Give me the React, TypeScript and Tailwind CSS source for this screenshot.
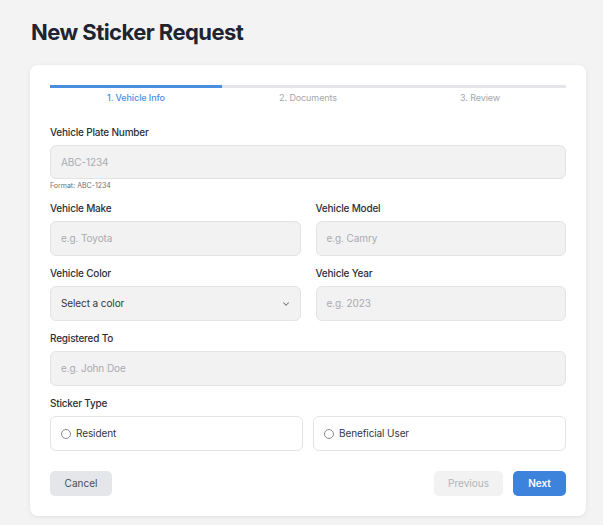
import React from "react";

function Label({ children }: { children: React.ReactNode }) {
  return (
    <div className="h-[14px] text-[10px] leading-[14px] font-medium text-[#2b2f38] tracking-[-0.2px]">
      {children}
    </div>
  );
}

function Input({ placeholder }: { placeholder: string }) {
  return (
    <div className="mt-[6px] h-[35px] rounded-[6px] border border-[#e3e3e6] bg-[#f2f2f3] px-[10px] flex items-center text-[10px] text-[#a9abb0] tracking-[-0.1px]">
      {placeholder}
    </div>
  );
}

function Radio({ label }: { label: string }) {
  return (
    <div className="h-[35px] rounded-[6px] border border-[#e3e3e6] bg-white px-[10px] flex items-center gap-[5px]">
      <span className="w-[10px] h-[10px] rounded-full border border-[#8a8d93] bg-white" />
      <span className="text-[10px] text-[#33363d] tracking-[-0.1px]">{label}</span>
    </div>
  );
}

export default function App() {
  return (
    <div
      className="min-h-[525px] bg-[#f3f3f3] pl-[30px] pr-[17px] pt-[18px]"
      style={{ fontFamily: "Inter, 'Noto Sans', sans-serif" }}
    >
      <h1 className="h-[28px] text-[22px] leading-[28px] font-bold text-[#1f2432] tracking-[-0.55px] pl-[1px]">
        New Sticker Request
      </h1>
      <div className="mt-[19px] bg-white rounded-[8px] shadow-[0_1px_4px_rgba(0,0,0,0.08)] px-5 pt-[20px] pb-5">
        <div className="grid grid-cols-3">
          <div className="h-[3px] bg-[#4a8ee0]" />
          <div className="h-[3px] bg-[#e4e6ea]" />
          <div className="h-[3px] bg-[#e4e6ea]" />
        </div>
        <div className="grid grid-cols-3 mt-[4px] text-[9px] leading-[12px] text-center tracking-[-0.1px]">
          <div className="text-[#4a8ee0] font-medium">1. Vehicle Info</div>
          <div className="text-[#a3a6ac]">2. Documents</div>
          <div className="text-[#a3a6ac]">3. Review</div>
        </div>

        <div className="mt-[21px]">
          <Label>Vehicle Plate Number</Label>
          <div className="mt-[6px] h-[34px] rounded-[6px] border border-[#e3e3e6] bg-[#f2f2f3] px-[10px] flex items-center text-[10px] text-[#a9abb0] tracking-[-0.1px]">
            ABC-1234
          </div>
          <div className="mt-[2px] text-[7px] leading-[10px] text-[#6b6e75]">Format: ABC-1234</div>
        </div>

        <div className="mt-[10px] grid grid-cols-2 gap-x-[15px]">
          <div>
            <Label>Vehicle Make</Label>
            <Input placeholder="e.g. Toyota" />
          </div>
          <div>
            <Label>Vehicle Model</Label>
            <Input placeholder="e.g. Camry" />
          </div>
        </div>

        <div className="mt-[10px] grid grid-cols-2 gap-x-[15px]">
          <div>
            <Label>Vehicle Color</Label>
            <div className="mt-[6px] h-[35px] rounded-[6px] border border-[#e3e3e6] bg-[#f2f2f3] pl-[10px] pr-[9px] flex items-center justify-between text-[10px] text-[#33363d] tracking-[-0.1px]">
              <span>Select a color</span>
              <svg width="10" height="10" viewBox="0 0 24 24" fill="none" stroke="#70737a" strokeWidth="2.5" strokeLinecap="round" strokeLinejoin="round">
                <path d="M6 9l6 6 6-6" />
              </svg>
            </div>
          </div>
          <div>
            <Label>Vehicle Year</Label>
            <Input placeholder="e.g. 2023" />
          </div>
        </div>

        <div className="mt-[10px]">
          <Label>Registered To</Label>
          <Input placeholder="e.g. John Doe" />
        </div>

        <div className="mt-[10px]">
          <Label>Sticker Type</Label>
          <div className="mt-[6px] grid grid-cols-2 gap-x-[10px]">
            <Radio label="Resident" />
            <Radio label="Beneficial User" />
          </div>
        </div>

        <div className="mt-[20px] flex items-center justify-between">
          <button className="h-[25px] w-[62px] rounded-[5px] bg-[#e4e6ea] text-[10px] text-[#4a4d55]">
            Cancel
          </button>
          <div className="flex gap-[10px]">
            <button className="h-[25px] w-[69px] rounded-[5px] bg-[#f2f2f3] text-[10px] text-[#b0b2b7]">
              Previous
            </button>
            <button className="h-[25px] w-[53px] rounded-[5px] bg-[#3d82db] text-[10px] font-semibold text-white">
              Next
            </button>
          </div>
        </div>
      </div>
    </div>
  );
}
